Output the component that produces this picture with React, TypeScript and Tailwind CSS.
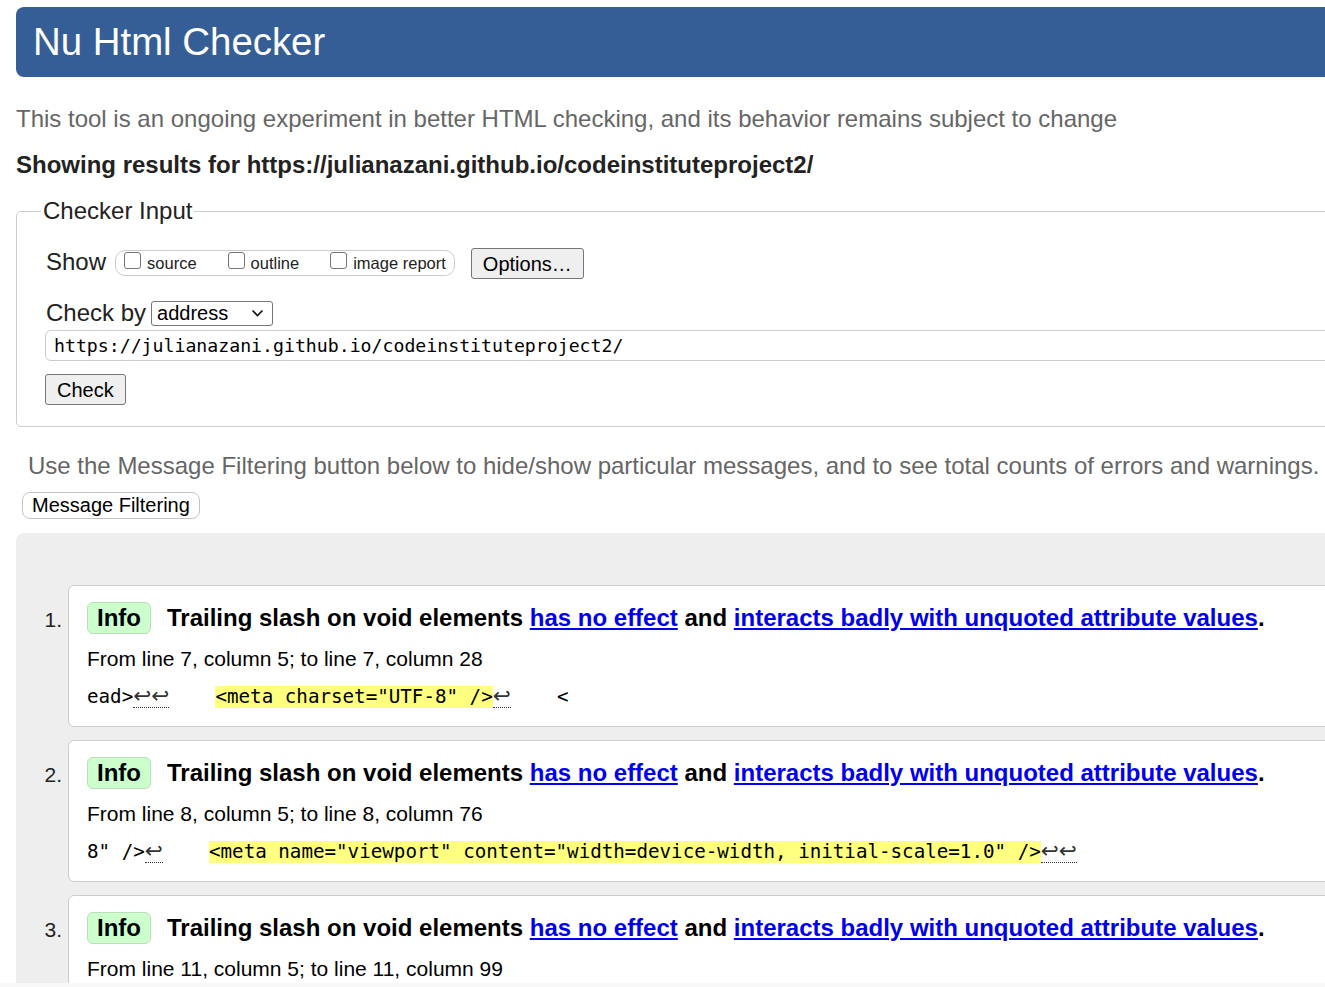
import * as React from "react"

type Msg = {
  from: string
  before: string
  beforeLf: number
  code: string
  afterLf: number
  tail: string
}

const messages: Msg[] = [
  {
    from: "From line 7, column 5; to line 7, column 28",
    before: "ead>",
    beforeLf: 2,
    code: '<meta charset="UTF-8" />',
    afterLf: 1,
    tail: "    <",
  },
  {
    from: "From line 8, column 5; to line 8, column 76",
    before: '8" />',
    beforeLf: 1,
    code: '<meta name="viewport" content="width=device-width, initial-scale=1.0" />',
    afterLf: 2,
    tail: "",
  },
  {
    from: "From line 11, column 5; to line 11, column 99",
    before: "",
    beforeLf: 0,
    code: "",
    afterLf: 0,
    tail: "",
  },
]

const Lf: React.FC<{ count: number }> = ({ count }) =>
  count > 0 ? (
    <span className="inline-block h-[22px] border-b border-dotted border-[#333] font-['DejaVu_Sans',sans-serif] text-[21.5px] leading-[20px] text-[#333]">
      {"↩".repeat(count)}
    </span>
  ) : null

const Checkbox: React.FC<{ label: string }> = ({ label }) => (
  <label className="flex items-center">
    <span className="mb-[6px] h-[17px] w-[17px] rounded-[3px] border border-[#767676] bg-white" />
    <span className="ml-[6px] text-[16.5px] leading-[20px] text-[#222]">{label}</span>
  </label>
)

const Message: React.FC<{ m: Msg; n: number }> = ({ m, n }) => (
  <li className="flex">
    <div className="w-[24px] shrink-0 pr-[6px] pt-[23px] text-right text-[21px] leading-[24px] text-[#222]">
      {n}.
    </div>
    <div className="flex-1 rounded-[6px] border border-[#cccccc] bg-white pb-[18px] pl-[18px] pt-[16px]">
      <div className="flex h-[32px] items-center whitespace-nowrap">
        <span className="flex h-[32px] items-center rounded-[6px] border border-[#b8dfb8] bg-[#ccffcc] px-[9px] text-[24px] font-bold text-black">
          Info
        </span>
        <p className="ml-[16px] text-[24px] font-bold leading-[28px] text-black">
          Trailing slash on void elements{" "}
          <a href="#" className="text-[#0000ee] underline">
            has no effect
          </a>{" "}
          and{" "}
          <a href="#" className="text-[#0000ee] underline">
            interacts badly with unquoted attribute values
          </a>
          .
        </p>
      </div>
      <p className="mt-[13px] text-[21px] leading-[24px] text-black">{m.from}</p>
      {m.code && (
        <p className="mt-[15px] flex h-[22px] items-start whitespace-pre font-['DejaVu_Sans_Mono',monospace] text-[19.2px] leading-[22px] text-black">
          <span>{m.before}</span>
          <Lf count={m.beforeLf} />
          <span>{"    "}</span>
          <span className="bg-[#ffff80]">{m.code}</span>
          <Lf count={m.afterLf} />
          <span>{m.tail}</span>
        </p>
      )}
    </div>
  </li>
)

export default function App() {
  return (
    <div className="flex h-[987px] w-[1325px] flex-col overflow-hidden bg-white font-['Liberation_Sans',Arial,sans-serif]">
      <div className="flex-1 overflow-hidden">
        <div className="w-[1400px] pl-[16px]">
          <header className="mt-[7px] flex h-[70px] items-center rounded-[8px] bg-[#365e96] pl-[17px]">
            <h1 className="text-[38.4px] leading-none text-white">Nu Html Checker</h1>
          </header>

          <p className="mt-[28px] text-[24px] leading-[28px] text-[#666666]">
            This tool is an ongoing experiment in better HTML checking, and its behavior remains
            subject to change
          </p>
          <p className="mt-[18px] text-[24px] font-bold leading-[28px] text-[#222222]">
            Showing results for https://julianazani.github.io/codeinstituteproject2/
          </p>

          <fieldset className="mt-[18px] rounded-[5px] border border-[#cccccc] px-[29px] pb-[21px]">
            <legend className="ml-[-5px] px-[2px] text-[24px] leading-[28px] text-[#222222]">
              Checker Input
            </legend>

            <div className="mt-[22px] flex h-[32px] items-center">
              <span className="mb-[2px] text-[24px] leading-[28px] text-[#222222]">Show</span>
              <div className="ml-[9px] flex h-[26px] items-center gap-[31px] rounded-[10px] border border-[#cccccc] px-[8px]">
                <Checkbox label="source" />
                <Checkbox label="outline" />
                <Checkbox label="image report" />
              </div>
              <button className="ml-[16px] h-[31px] rounded-[3px] border border-[#767676] bg-[#efefef] px-[11px] text-[20px] text-black">
                Options…
              </button>
            </div>

            <div className="mt-[21px] flex h-[26px] items-center">
              <span className="text-[24px] leading-[28px] text-[#222222]">Check by</span>
              <div className="ml-[5px] flex h-[25px] w-[122px] items-center justify-between rounded-[3px] border border-[#767676] bg-white pl-[5px] pr-[8px] text-[20px] text-black">
                <span>address</span>
                <svg width="13" height="8" viewBox="0 0 13 8" fill="none">
                  <path d="M1.5 1.5 L6.5 6.5 L11.5 1.5" stroke="#111" strokeWidth="1.6" />
                </svg>
              </div>
            </div>

            <div className="ml-[-1px] mt-[4px] flex h-[31px] items-center rounded-[6px] border border-[#cccccc] pl-[8px] font-['DejaVu_Sans_Mono',monospace] text-[18.2px] text-black">
              https://julianazani.github.io/codeinstituteproject2/
            </div>

            <button className="ml-[-1px] mt-[13px] block h-[31px] rounded-[3px] border border-[#767676] bg-[#efefef] px-[11px] text-[20px] text-black">
              Check
            </button>
          </fieldset>

          <p className="ml-[12px] mt-[25px] text-[24px] leading-[28px] text-[#666666]">
            Use the Message Filtering button below to hide/show particular messages, and to see
            total counts of errors and warnings.
          </p>
          <button className="ml-[6px] mt-[12px] block h-[27px] rounded-[8px] border border-[#c4c4c4] bg-white px-[9px] text-[20px] leading-[25px] text-black">
            Message Filtering
          </button>

          <div className="mt-[14px] rounded-tl-[8px] bg-[#eeeeee] pb-[40px] pl-[28px] pt-[52px]">
            <ol className="flex flex-col gap-[13px]">
              {messages.map((m, i) => (
                <Message key={i} m={m} n={i + 1} />
              ))}
            </ol>
          </div>
        </div>
      </div>
      <div className="h-[4px] bg-[#f8f8f8]" />
    </div>
  )
}
